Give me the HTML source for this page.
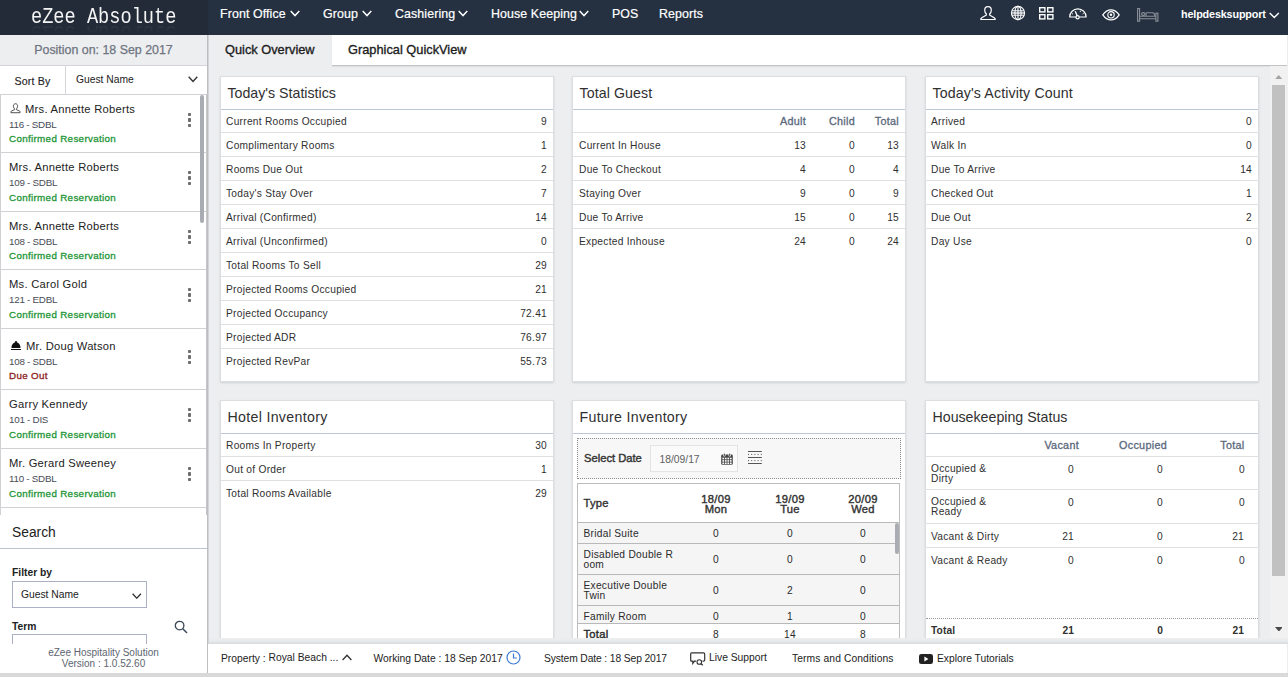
<!DOCTYPE html>
<html>
<head>
<meta charset="utf-8">
<title>eZee Absolute</title>
<style>
*{box-sizing:border-box;margin:0;padding:0}
html,body{width:1288px;height:677px;overflow:hidden;background:#edeef0;font-family:"Liberation Sans",sans-serif;color:#2a2a2a;font-size:11px}
.abs{position:absolute}
#hdr{position:absolute;left:0;top:0;width:1288px;height:35px;background:linear-gradient(to right,#222b37 0,#222b37 207px,#253141 209px,#253141 100%)}
#logo{position:absolute;left:31px;top:2px;width:200px;height:32px;font-family:"Liberation Mono",monospace;font-size:22.600px;line-height:30px;color:#f4f4f4;white-space:nowrap;transform-origin:0 0;transform:scaleX(0.825)}
#logo2{position:absolute;left:31px;top:15px;width:200px;height:32px;font-family:"Liberation Mono",monospace;font-size:22.600px;line-height:30px;color:#fff;white-space:nowrap;transform-origin:0 50%;transform:scale(0.825,-1);opacity:.09;-webkit-mask-image:linear-gradient(to top,#000 20%,transparent 60%)}
.nav{position:absolute;top:0;height:28px;line-height:28px;color:#fff;font-size:12.400px;letter-spacing:.1px;white-space:nowrap;-webkit-text-stroke:.2px #fff}
.chev{position:absolute;top:10px;width:10px;height:7px}
.chev svg,.ico svg{display:block}
.ico{position:absolute}
#side{position:absolute;left:0;top:35px;width:208px;height:642px;background:#fff}
#pos{position:absolute;left:0;top:0;width:207px;height:31px;background:#edeef0;border-bottom:1px solid #d2d4d8;color:#6d7480;font-size:12.400px;line-height:31px;text-align:center;-webkit-text-stroke:.25px #6d7480}
#main{position:absolute;left:208px;top:35px;width:1080px;height:603px;background:#edeef0;overflow:hidden}
.panel{position:absolute;background:#fff;border:1px solid #dcdee2;box-shadow:0 1px 2px rgba(0,0,0,.12)}
.ptitle{position:absolute;left:0;top:0;right:0;height:33px;border-bottom:1px solid #bcc6d4;font-size:15px;line-height:32px;padding-left:7px;color:#303030;white-space:nowrap}
.row{position:absolute;left:0;right:0;height:24px;border-bottom:1px solid #dddfe2;line-height:25px;font-size:11px;white-space:nowrap}
.row .l{position:absolute;left:5px}
.row .r{position:absolute;right:6px;text-align:right}

#tabbar{position:absolute;left:124px;top:0;width:955px;height:30px;background:#fff;box-shadow:0 1px 0 #c2c3c5,0 2px 1px rgba(0,0,0,.06)}
#tab1,#tab2{position:absolute;top:0;height:30px;line-height:29px;font-size:12.800px;color:#1d1d1d;white-space:nowrap;-webkit-text-stroke:.35px #1d1d1d}
#tab1{left:17px}
#tab2{left:140px}

#side{border-right:1px solid #bdbec1}
#sideb{position:absolute;left:208px;top:35px;width:1px;height:609px;background:#d3d4d7;z-index:5}
#sortby{position:absolute;left:0;top:31px;width:66px;height:28px;border-right:1px solid #d2d4d8;line-height:30px;font-size:10.600px;letter-spacing:.2px;text-align:center;color:#222;-webkit-text-stroke:.12px #222}
#sortsel{position:absolute;left:66px;top:31px;width:141px;height:28px;line-height:27px;font-size:10.300px;padding-left:10px;color:#222}
#glist{position:absolute;left:0;top:0;width:207px;height:480px;overflow:hidden}
.gitem{position:absolute;left:0;width:207px;border:1px solid #d0d2d6;border-right-color:#c4c6ca;border-bottom:none;background:#fff}
.gi{position:absolute}
.gn{position:absolute;font-size:11.200px;letter-spacing:.25px;line-height:16px;color:#222;white-space:nowrap}
.gr{margin-top:-1px;position:absolute;left:8px;font-size:9.800px;letter-spacing:-.25px;line-height:13px;color:#474c57;white-space:nowrap}
.gs{position:absolute;left:8px;margin-top:-1px;font-size:9.800px;letter-spacing:.33px;line-height:13px;white-space:nowrap}
.gs.ok{color:#1f9638;-webkit-text-stroke:.3px #1f9638}
.gs.due{color:#8c1c1c;-webkit-text-stroke:.3px #8c1c1c}
.kb{position:absolute;left:186.700px;width:4px;margin-top:-1px}
.kb i{display:block;width:3.200px;height:3.200px;background:#6e6e6e;margin-bottom:2.300px;border-radius:.8px}
#gscroll{position:absolute;left:200px;top:60px;width:4px;height:128px;background:#a9adb3;border-radius:2px}
#search{position:absolute;left:0;top:480px;width:207px;height:130px;background:#fff;overflow:hidden}
#shead{position:absolute;left:0;top:0;width:207px;height:34px;border-bottom:1px solid #bcc3d2;font-size:13.800px;line-height:35px;padding-left:12px;color:#222}
.slbl{position:absolute;left:12px;margin-top:1px;font-size:10.300px;line-height:13px;color:#222;font-weight:bold}
#ssel{position:absolute;left:12px;top:66px;width:135px;height:27px;border:1px solid #aab1c4;font-size:10.300px;line-height:25px;padding-left:8px;color:#222}
#sterm{position:absolute;left:12px;top:118.500px;width:135px;height:27px;border:1px solid #aab1c4}
#sfoot{position:absolute;left:0;top:609px;width:207px;height:28px;background:#fff;text-align:center;font-size:10px;line-height:11px;color:#5d6570;padding-top:3px}
#botbar{position:absolute;left:0;top:673px;width:1288px;height:4px;background:#d9d9d9}

.ptitle{font-size:14.200px;padding-left:6.500px}
.row{font-size:10.200px;letter-spacing:.27px;color:#303030}
.row.nb{border-bottom:none}
.row .c{position:absolute;text-align:right}
.row.hd .c{color:#5a687c;-webkit-text-stroke:.3px #5a687c;font-size:10.800px;letter-spacing:.3px}
.row.tot{font-weight:bold;font-size:10.200px;letter-spacing:.1px}
.row .hk{line-height:10px;top:7px}
#fsel{position:absolute;left:4px;top:37px;width:324px;height:41px;background:#f7f7f7;border:1px dotted #8c8c8c}
#fsl{position:absolute;left:6px;top:13px;font-size:11.200px;-webkit-text-stroke:.4px #333;line-height:13px;color:#333;white-space:nowrap}
#fdate{position:absolute;left:72px;top:6px;width:88px;height:27px;border:1px solid #e3e3e3;background:#fafafa;font-size:10.300px;line-height:27px;padding-left:8.500px;color:#606060}
#ftab{position:absolute;left:4px;top:82px;width:323px;height:180px;border:1px solid #bdbdbd;background:#fff;overflow:hidden}
.frow{position:absolute;left:0;width:321px;border-bottom:1px solid #b9b9b9;background:#f5f5f5;font-size:10.200px;letter-spacing:.27px;line-height:10px}
.frow.fh{background:#fff;font-size:11.200px;color:#333;-webkit-text-stroke:.4px #333}
.frow.ftot{background:#fff;font-weight:normal;border-top:1px solid #b9b9b9}
.frow.ftot .ft{font-size:11.200px;-webkit-text-stroke:.4px #2a2a2a}
.frow .ft{position:absolute;left:5.500px;white-space:nowrap;line-height:10px}
.frow .fc{position:absolute;width:60px;text-align:center;line-height:10px}
#fscroll{position:absolute;left:317px;top:39px;width:4px;height:31px;background:#a9adb3;border-radius:2px}
#vscroll{position:absolute;left:1062px;top:31px;width:18px;height:572px;background:#f1f1f1}
#vthumb{position:absolute;left:2px;top:19px;width:13px;height:491px;background:#c1c1c1}
#foot{position:absolute;left:208px;top:644px;width:1079px;height:29px;background:#fff}
#fband{position:absolute;left:208px;top:638px;width:1080px;height:6px;background:linear-gradient(to bottom,#edeef0 0%,#e9eaec 50%,#d8d9db 100%)}
.ft2{position:absolute;top:8px;font-size:10.300px;line-height:14px;color:#222;white-space:nowrap}
.frow:not(.fh) .ft,.frow:not(.fh) .fc{margin-top:1px}
.frow.ftot .ft{margin-top:0}
</style>
</head>
<body>
<div id="hdr">
  <div id="logo">eZee Absolute</div>
  <div id="logo2">eZee Absolute</div>

  <div class="nav" id="n1" style="left:220px">Front Office</div>
  <div class="chev" style="left:290px"><svg width="10" height="7" viewBox="0 0 10 7"><path d="M0.7 1 L5 5.6 L9.3 1" fill="none" stroke="#fff" stroke-width="1.4"/></svg></div>
  <div class="nav" id="n2" style="left:323px">Group</div>
  <div class="chev" style="left:362px"><svg width="10" height="7" viewBox="0 0 10 7"><path d="M0.7 1 L5 5.6 L9.3 1" fill="none" stroke="#fff" stroke-width="1.4"/></svg></div>
  <div class="nav" id="n3" style="left:395px">Cashiering</div>
  <div class="chev" style="left:458px"><svg width="10" height="7" viewBox="0 0 10 7"><path d="M0.7 1 L5 5.6 L9.3 1" fill="none" stroke="#fff" stroke-width="1.4"/></svg></div>
  <div class="nav" id="n4" style="left:491px">House Keeping</div>
  <div class="chev" style="left:579px"><svg width="10" height="7" viewBox="0 0 10 7"><path d="M0.7 1 L5 5.6 L9.3 1" fill="none" stroke="#fff" stroke-width="1.4"/></svg></div>
  <div class="nav" id="n5" style="left:612px">POS</div>
  <div class="nav" id="n6" style="left:659px">Reports</div>

  <div class="ico" style="left:980px;top:5.800px"><svg width="16" height="15" viewBox="0 0 16 15"><path d="M8 .6 C10.200 .6 11.300 2.200 11.300 4.200 C11.300 6 10.400 7.300 9.600 8 L9.600 9 L14.600 12 Q15.200 12.500 15.200 13.500 L.8 13.500 Q.8 12.500 1.400 12 L6.400 9 L6.400 8 C5.600 7.300 4.700 6 4.700 4.200 C4.700 2.200 5.800 .6 8 .6 Z" fill="none" stroke="#fff" stroke-width="1.200" stroke-linejoin="round"/></svg></div>
  <div class="ico" style="left:1009.600px;top:4.800px"><svg width="16" height="16" viewBox="0 0 16 16"><g fill="none" stroke="#fff" stroke-width="1.100"><circle cx="8" cy="8" r="6.600"/><ellipse cx="8" cy="8" rx="3.100" ry="6.600"/><path d="M8 1.400V14.600"/><path d="M2 5.800H14M2 10.200H14" stroke-width="1"/><path d="M1.400 8H14.600" stroke-width="1.300"/></g></svg></div>
  <div class="ico" style="left:1039.200px;top:7px"><svg width="15" height="13" viewBox="0 0 15 13"><g fill="none" stroke="#fff" stroke-width="1.400"><rect x=".7" y=".7" width="5.200" height="4.200"/><rect x="8.700" y=".7" width="5.200" height="4.200"/><rect x=".7" y="7.700" width="5.200" height="4.200"/><rect x="8.700" y="7.700" width="5.200" height="4.200"/></g></svg></div>
  <div class="ico" style="left:1069px;top:7.500px"><svg width="18" height="12" viewBox="0 0 18 12"><g fill="none" stroke="#fff" stroke-width="1.200" stroke-linejoin="round"><path d="M.7 9 A8.200 8.200 0 0 1 17.100 9 Z"/><path d="M6.200 3.200 L8.400 8.200" stroke-width="1.300"/><path d="M11.600 2.600 L11.200 4 M14.700 5.300 L13.600 6 M3 5.600 L4 6.200" stroke-width=".9"/><circle cx="8.600" cy="9.300" r="1.600" fill="#253141"/></g></svg></div>
  <div class="ico" style="left:1101.500px;top:8.500px"><svg width="18" height="12" viewBox="0 0 18 12"><g fill="none" stroke="#fff" stroke-width="1.200"><path d="M.8 5.800 C3.200 2.300 6 .8 9 .8 C12 .8 14.800 2.300 17.200 5.800 C14.800 9.300 12 10.800 9 10.800 C6 10.800 3.200 9.300 .8 5.800 Z"/><circle cx="9" cy="5.800" r="3.200" stroke-width="1.100"/><circle cx="9" cy="5.800" r="1.200" fill="#fff" stroke="none"/></g></svg></div>
  <div class="ico" style="left:1137.300px;top:8.200px"><svg width="22" height="14" viewBox="0 0 22 14"><g fill="none" stroke="#8b9098" stroke-width="1.100"><rect x=".6" y=".6" width="2" height="12.600"/><rect x="18.900" y="5.200" width="2" height="8"/><path d="M2.600 8.200 H18.900 M2.600 10.800 H18.900"/><path d="M9 8.200 V5.600 Q9 4.800 10 4.800 H15.500 Q17.800 4.800 17.800 8.200"/><ellipse cx="6.300" cy="6" rx="1.700" ry="1.400"/></g></svg></div>
  <div class="nav" id="n7" style="left:1181px;font-size:10.800px;font-weight:bold;letter-spacing:-.15px;-webkit-text-stroke:0;top:-.5px">helpdesksupport</div>
  <div class="chev" style="left:1269.300px;top:11.700px"><svg width="10.500" height="7" viewBox="0 0 10.500 7"><path d="M.7 .9 L5.250 5.600 L9.800 .9" fill="none" stroke="#fff" stroke-width="1.400"/></svg></div>
</div>
<div id="side">
  <div id="pos">Position on: 18 Sep 2017</div>
  <div id="sortby">Sort By</div>
  <div id="sortsel">Guest Name<svg width="10" height="7" viewBox="0 0 10 7" style="position:absolute;left:121.800px;top:10px"><path d="M.7 .8 L5 5.400 L9.300 .8" fill="none" stroke="#333" stroke-width="1.400"/></svg></div>
  <div id="glist">
  <div class="gitem" style="top:59px;height:58px"><svg class="gi" style="left:8.600px;top:8.300px" width="11" height="11" viewBox="0 0 12 12"><path d="M6 .8 C7.600 .8 8.300 2 8.300 3.500 C8.300 5 7.500 6 7 6.500 L7 7.300 L10.500 8.800 C11 9.100 11 10 11 10.600 L1 10.600 C1 10 1 9.100 1.500 8.800 L5 7.300 L5 6.500 C4.500 6 3.700 5 3.700 3.500 C3.700 2 4.400 .8 6 .8 Z" fill="none" stroke="#444" stroke-width="1"/></svg>
    <div class="gn" style="left:24px;top:6px">Mrs. Annette Roberts</div>
    <div class="gr" style="top:24px">116 - SDBL</div>
    <div class="gs ok" style="top:38px">Confirmed Reservation</div>
    <div class="kb" style="top:19px"><i></i><i></i><i></i></div>
  </div>
  <div class="gitem" style="top:117px;height:59px">
    <div class="gn" style="left:8px;top:6px">Mrs. Annette Roberts</div>
    <div class="gr" style="top:24px">109 - SDBL</div>
    <div class="gs ok" style="top:39px">Confirmed Reservation</div>
    <div class="kb" style="top:19px"><i></i><i></i><i></i></div>
  </div>
  <div class="gitem" style="top:176px;height:58px">
    <div class="gn" style="left:8px;top:6px">Mrs. Annette Roberts</div>
    <div class="gr" style="top:24px">108 - SDBL</div>
    <div class="gs ok" style="top:38px">Confirmed Reservation</div>
    <div class="kb" style="top:19px"><i></i><i></i><i></i></div>
  </div>
  <div class="gitem" style="top:234px;height:59px">
    <div class="gn" style="left:8px;top:6px">Ms. Carol Gold</div>
    <div class="gr" style="top:24px">121 - EDBL</div>
    <div class="gs ok" style="top:39px">Confirmed Reservation</div>
    <div class="kb" style="top:19px"><i></i><i></i><i></i></div>
  </div>
  <div class="gitem" style="top:293px;height:61px"><svg class="gi" style="left:9.900px;top:12px" width="10" height="9" viewBox="0 0 10 9"><path d="M4.200 0 H5.800 V1.400 H4.200 Z M.5 6.900 C.5 3.800 2.400 1.300 5 1.300 C7.600 1.300 9.500 3.800 9.500 6.900 Z M0 7.900 H10 V9 H0 Z" fill="#111"/></svg>
    <div class="gn" style="left:25px;top:9px">Mr. Doug Watson</div>
    <div class="gr" style="top:27px">108 - SDBL</div>
    <div class="gs due" style="top:41px">Due Out</div>
    <div class="kb" style="top:22px"><i></i><i></i><i></i></div>
  </div>
  <div class="gitem" style="top:354px;height:59px">
    <div class="gn" style="left:8px;top:6px">Garry Kennedy</div>
    <div class="gr" style="top:24px">101 - DIS</div>
    <div class="gs ok" style="top:39px">Confirmed Reservation</div>
    <div class="kb" style="top:19px"><i></i><i></i><i></i></div>
  </div>
  <div class="gitem" style="top:413px;height:59px">
    <div class="gn" style="left:8px;top:6px">Mr. Gerard Sweeney</div>
    <div class="gr" style="top:24px">110 - SDBL</div>
    <div class="gs ok" style="top:39px">Confirmed Reservation</div>
    <div class="kb" style="top:19px"><i></i><i></i><i></i></div>
  </div>
  <div class="gitem" style="top:472px;height:30px"></div>
  </div>
  <div id="gscroll"></div>
  <div id="search">
    <div id="shead">Search</div>
    <div class="slbl" style="top:50px">Filter by</div>
    <div id="ssel">Guest Name<svg width="9.500" height="6.500" viewBox="0 0 9.500 6.500" style="position:absolute;left:119px;top:10.500px"><path d="M.6 .8 L4.750 5.200 L8.900 .8" fill="none" stroke="#333" stroke-width="1.300"/></svg></div>
    <div class="slbl" style="top:104px">Term</div>
    <div id="sterm"></div>
    <svg style="position:absolute;left:174px;top:105px" width="14" height="14" viewBox="0 0 14 14"><circle cx="5.600" cy="5.600" r="4.300" fill="none" stroke="#3b4656" stroke-width="1.300"/><path d="M8.800 8.800 L13 13" stroke="#3b4656" stroke-width="1.500"/></svg>
  </div>
  <div id="sfoot">eZee Hospitality Solution<br>Version : 1.0.52.60</div>
</div>
<div id="sideb"></div>
<div id="main">
  <div id="tabbar"></div>
  <div id="tab1">Quick Overview</div>
  <div id="tab2">Graphical QuickView</div>
  <div class="panel" style="left:12px;top:41px;width:334px;height:306px">
    <div class="ptitle">Today's Statistics</div>
    <div class="row" style="top:32px"><span class="l">Current Rooms Occupied</span><span class="r">9</span></div>
    <div class="row" style="top:56px"><span class="l">Complimentary Rooms</span><span class="r">1</span></div>
    <div class="row" style="top:80px"><span class="l">Rooms Due Out</span><span class="r">2</span></div>
    <div class="row" style="top:104px"><span class="l">Today's Stay Over</span><span class="r">7</span></div>
    <div class="row" style="top:128px"><span class="l">Arrival (Confirmed)</span><span class="r">14</span></div>
    <div class="row" style="top:152px"><span class="l">Arrival (Unconfirmed)</span><span class="r">0</span></div>
    <div class="row" style="top:176px"><span class="l">Total Rooms To Sell</span><span class="r">29</span></div>
    <div class="row" style="top:200px"><span class="l">Projected Rooms Occupied</span><span class="r">21</span></div>
    <div class="row" style="top:224px"><span class="l">Projected Occupancy</span><span class="r">72.41</span></div>
    <div class="row" style="top:248px"><span class="l">Projected ADR</span><span class="r">76.97</span></div>
    <div class="row nb" style="top:272px"><span class="l">Projected RevPar</span><span class="r">55.73</span></div>
  </div>
  <div class="panel" style="left:364px;top:41px;width:334px;height:306px">
    <div class="ptitle" style="letter-spacing:0.09px">Total Guest</div>
    <div class="row hd" style="top:32px"><span class="c" style="right:99px">Adult</span><span class="c" style="right:50px">Child</span><span class="c" style="right:6px">Total</span></div>
    <div class="row" style="top:56px"><span class="l" style="left:6px">Current In House</span><span class="c" style="right:99px">13</span><span class="c" style="right:50px">0</span><span class="c" style="right:6px">13</span></div>
    <div class="row" style="top:80px"><span class="l" style="left:6px">Due To Checkout</span><span class="c" style="right:99px">4</span><span class="c" style="right:50px">0</span><span class="c" style="right:6px">4</span></div>
    <div class="row" style="top:104px"><span class="l" style="left:6px">Staying Over</span><span class="c" style="right:99px">9</span><span class="c" style="right:50px">0</span><span class="c" style="right:6px">9</span></div>
    <div class="row" style="top:128px"><span class="l" style="left:6px">Due To Arrive</span><span class="c" style="right:99px">15</span><span class="c" style="right:50px">0</span><span class="c" style="right:6px">15</span></div>
    <div class="row nb" style="top:152px"><span class="l" style="left:6px">Expected Inhouse</span><span class="c" style="right:99px">24</span><span class="c" style="right:50px">0</span><span class="c" style="right:6px">24</span></div>
  </div>
  <div class="panel" style="left:717px;top:41px;width:334px;height:306px">
    <div class="ptitle" style="letter-spacing:0.13px">Today's Activity Count</div>
    <div class="row" style="top:32px"><span class="l">Arrived</span><span class="r">0</span></div>
    <div class="row" style="top:56px"><span class="l">Walk In</span><span class="r">0</span></div>
    <div class="row" style="top:80px"><span class="l">Due To Arrive</span><span class="r">14</span></div>
    <div class="row" style="top:104px"><span class="l">Checked Out</span><span class="r">1</span></div>
    <div class="row" style="top:128px"><span class="l">Due Out</span><span class="r">2</span></div>
    <div class="row nb" style="top:152px"><span class="l">Day Use</span><span class="r">0</span></div>
  </div>
  <div class="panel" style="left:12px;top:365px;width:334px;height:260px">
    <div class="ptitle" style="letter-spacing:0.31px">Hotel Inventory</div>
    <div class="row" style="top:32px"><span class="l">Rooms In Property</span><span class="r">30</span></div>
    <div class="row" style="top:56px"><span class="l">Out of Order</span><span class="r">1</span></div>
    <div class="row nb" style="top:80px"><span class="l">Total Rooms Available</span><span class="r">29</span></div>
  </div>
  <div class="panel" style="left:364px;top:365px;width:334px;height:260px">
    <div class="ptitle" style="letter-spacing:0.29px">Future Inventory</div>
    <div id="fsel">
      <div id="fsl">Select Date</div>
      <div id="fdate">18/09/17<svg style="position:absolute;left:70.300px;top:7px" width="12" height="12" viewBox="0 0 12 12"><rect x=".2" y="1.600" width="11.600" height="10.200" rx="1.300" fill="#454545"/><g fill="#fff"><rect x="1.4" y="4.7" width="1.700" height="1.600"/><rect x="3.9" y="4.7" width="1.700" height="1.600"/><rect x="6.4" y="4.7" width="1.700" height="1.600"/><rect x="8.9" y="4.7" width="1.700" height="1.600"/><rect x="1.4" y="7.1" width="1.700" height="1.600"/><rect x="3.9" y="7.1" width="1.700" height="1.600"/><rect x="6.4" y="7.1" width="1.700" height="1.600"/><rect x="8.9" y="7.1" width="1.700" height="1.600"/><rect x="1.4" y="9.5" width="1.700" height="1.600"/><rect x="3.9" y="9.5" width="1.700" height="1.600"/><rect x="6.4" y="9.5" width="1.700" height="1.600"/><rect x="8.9" y="9.5" width="1.700" height="1.600"/><rect x="2.100" y="0" width="2.400" height="3.400" rx="1"/><rect x="7.500" y="0" width="2.400" height="3.400" rx="1"/></g><rect x="2.700" y=".4" width="1.200" height="2.500" rx=".6" fill="#454545"/><rect x="8.100" y=".4" width="1.200" height="2.500" rx=".6" fill="#454545"/></svg></div>
      <svg style="position:absolute;left:170.200px;top:12.400px" width="13.800" height="13" viewBox="0 0 13.800 13"><g fill="#555"><rect x="0" y="0" width="13.800" height="1"/><rect x="0" y="6" width="13.800" height="1"/><rect x="0" y="12" width="13.800" height="1"/><rect x="0" y="2.9" width="1" height="1"/><rect x="3.2" y="2.9" width="1" height="1"/><rect x="6.4" y="2.9" width="1" height="1"/><rect x="9.6" y="2.9" width="1" height="1"/><rect x="12.8" y="2.9" width="1" height="1"/><rect x="0" y="9.1" width="1" height="1"/><rect x="3.2" y="9.1" width="1" height="1"/><rect x="6.4" y="9.1" width="1" height="1"/><rect x="9.6" y="9.1" width="1" height="1"/><rect x="12.8" y="9.1" width="1" height="1"/></g></svg>
    </div>
    <div id="ftab">
      <div class="frow fh" style="top:0;height:39px"><span class="ft" style="top:14px">Type</span><span class="fc" style="left:108px;top:9.500px">18/09<br>Mon</span><span class="fc" style="left:182px;top:9.500px">19/09<br>Tue</span><span class="fc" style="left:255px;top:9.500px">20/09<br>Wed</span></div>
      <div class="frow" style="top:39px;height:21px"><span class="ft" style="top:5px">Bridal Suite</span><span class="fc" style="left:108px;top:5px">0</span><span class="fc" style="left:182px;top:5px">0</span><span class="fc" style="left:255px;top:5px">0</span></div>
      <div class="frow" style="top:60px;height:31px"><span class="ft" style="top:5px">Disabled Double R<br>oom</span><span class="fc" style="left:108px;top:10px">0</span><span class="fc" style="left:182px;top:10px">0</span><span class="fc" style="left:255px;top:10px">0</span></div>
      <div class="frow" style="top:91px;height:31px"><span class="ft" style="top:5px">Executive Double<br>Twin</span><span class="fc" style="left:108px;top:10px">0</span><span class="fc" style="left:182px;top:10px">2</span><span class="fc" style="left:255px;top:10px">0</span></div>
      <div class="frow" style="top:122px;height:18px;border-bottom:none"><span class="ft" style="top:5px">Family Room</span><span class="fc" style="left:108px;top:5px">0</span><span class="fc" style="left:182px;top:5px">1</span><span class="fc" style="left:255px;top:5px">0</span></div>
      <div class="frow ftot" style="top:139px;height:30px"><span class="ft" style="top:5px">Total</span><span class="fc" style="left:108px;top:5px">8</span><span class="fc" style="left:182px;top:5px">14</span><span class="fc" style="left:255px;top:5px">8</span></div>
      <div id="fscroll"></div>
    </div>
  </div>
  <div class="panel" style="left:717px;top:365px;width:334px;height:260px">
    <div class="ptitle">Housekeeping Status</div>
    <div class="row hd" style="top:32px"><span class="c" style="right:179px">Vacant</span><span class="c" style="right:91px">Occupied</span><span class="c" style="right:13.500px">Total</span></div>
    <div class="row" style="top:56px;height:33px"><span class="l hk">Occupied &amp;<br>Dirty</span><span class="c" style="right:184px">0</span><span class="c" style="right:95px">0</span><span class="c" style="right:13px">0</span></div>
    <div class="row" style="top:89px;height:34px"><span class="l hk">Occupied &amp;<br>Ready</span><span class="c" style="right:184px">0</span><span class="c" style="right:95px">0</span><span class="c" style="right:13px">0</span></div>
    <div class="row" style="top:123px;height:24px"><span class="l">Vacant &amp; Dirty</span><span class="c" style="right:184px">21</span><span class="c" style="right:95px">0</span><span class="c" style="right:14px">21</span></div>
    <div class="row nb" style="top:147px;height:24px"><span class="l">Vacant &amp; Ready</span><span class="c" style="right:184px">0</span><span class="c" style="right:95px">0</span><span class="c" style="right:13px">0</span></div>
    <div class="row nb tot" style="top:217px;height:26px;border-top:1px dotted #9a9a9a;line-height:24px"><span class="l">Total</span><span class="c" style="right:184px">21</span><span class="c" style="right:95px">0</span><span class="c" style="right:14px">21</span></div>
  </div>
  <div id="vscroll"><div id="vthumb"></div>
    <svg style="position:absolute;left:4.800px;top:8.800px" width="7.400" height="4.200" viewBox="0 0 7.400 4.200"><path d="M0 4.200 L3.700 0 L7.400 4.200 Z" fill="#a3a3a3"/></svg>
    <svg style="position:absolute;left:4.700px;top:560.500px" width="7.800" height="4.600" viewBox="0 0 7.800 4.600"><path d="M0 0 L3.900 4.600 L7.800 0 Z" fill="#4a4a4a"/></svg>
  </div>
</div>
<div id="fband"></div>
<div id="foot">
  <span class="ft2" style="left:13px;top:7px;font-size:10.300px"><span style="position:relative;top:1px">Property :</span> Royal Beach ...</span>
  <svg style="position:absolute;left:134px;top:10.300px" width="10" height="7" viewBox="0 0 10 7"><path d="M.6 6 L5 1.200 L9.400 6" fill="none" stroke="#333" stroke-width="1.300"/></svg>
  <span class="ft2" style="left:165.500px">Working Date : 18 Sep 2017</span>
  <svg style="position:absolute;left:298px;top:6.200px" width="15" height="15" viewBox="0 0 15 15"><circle cx="7.500" cy="7.500" r="6.500" fill="none" stroke="#3b7bd4" stroke-width="1.200"/><path d="M7.500 3.600 V8 H10.800" fill="none" stroke="#3b7bd4" stroke-width="1.200"/></svg>
  <span class="ft2" style="left:336px;letter-spacing:-.12px">System Date : 18 Sep 2017</span>
  <svg style="position:absolute;left:482px;top:8px" width="16" height="14" viewBox="0 0 16 14"><path d="M1.500 .8 H13.500 Q14.700 .8 14.700 2 V8 Q14.700 9.200 13.500 9.200 H12.500 M6 9.200 H4.500 L2.800 11.500 V9.200 H1.500 Q.7 9.200 .7 8 V2 Q.7 .8 1.500 .8" fill="none" stroke="#333" stroke-width="1.200"/><circle cx="9.300" cy="10" r="2.300" fill="none" stroke="#333" stroke-width="1.100"/><path d="M11 11.700 L12.800 13.300" stroke="#333" stroke-width="1.200"/></svg>
  <span class="ft2" style="left:501px;top:7px">Live Support</span>
  <span class="ft2" style="left:584px;letter-spacing:.1px">Terms and Conditions</span>
  <svg style="position:absolute;left:710.600px;top:9.800px" width="14" height="10" viewBox="0 0 14 10"><rect x="0" y="0" width="14" height="10" rx="2.300" fill="#222"/><path d="M5.400 2.600 L9.400 5 L5.400 7.400 Z" fill="#fff"/></svg>
  <span class="ft2" style="left:729px">Explore Tutorials</span>
</div>
<div id="botbar"></div>
</body>
</html>
